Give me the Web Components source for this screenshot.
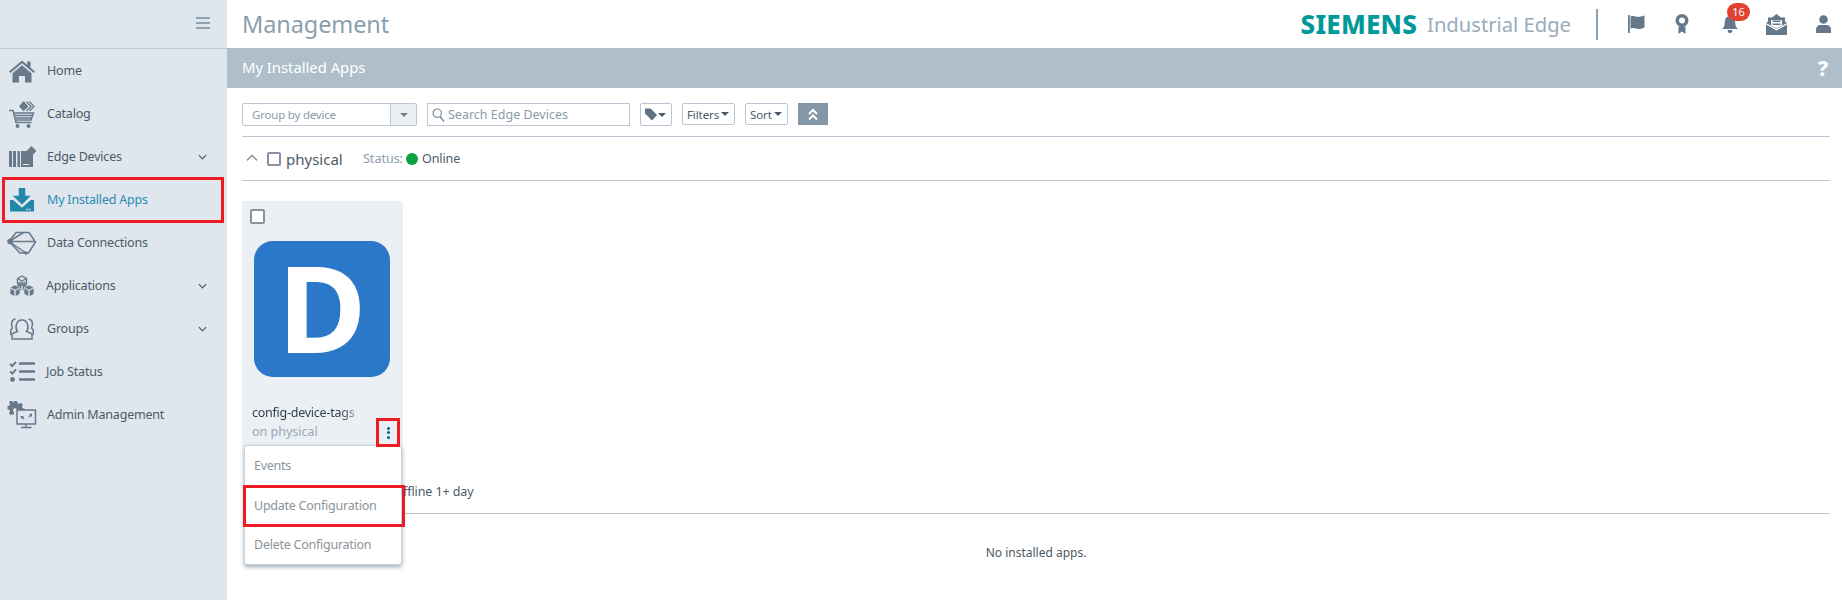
<!DOCTYPE html>
<html>
<head>
<meta charset="utf-8">
<title>Management</title>
<style>
  html, body {
    margin: 0;
    height: 100%;
    overflow: hidden;
    background: #fff;
    font-family: "Noto Sans", "Open Sans", sans-serif;
  }
</style>
</head>
<body>
<edge-app></edge-app>
<script>
const ICONS = {
  home: `<svg width="28" height="24" viewBox="0 0 28 24"><path fill="currentColor" d="M1 12.500 14 1.500l5 4.200V2.500h3.600v6.300L27 12.500l-1.300 1.500L14 4.300 2.300 14z"/><path fill="currentColor" d="M4.500 14.200 14 6.300l9.500 7.900V23.500H17v-6.500h-6v6.500H4.500z"/></svg>`,
  catalog: `<svg width="28" height="28" viewBox="0 0 28 28"><path fill="currentColor" d="M11 6.500 15.500 1l5 5.500-5 4.800z"/><path fill="none" stroke="currentColor" stroke-width="1.300" d="M18.500 1.500 23 6.500l-4.500 4.500M21.500 1.500 26 6.500l-4.500 4.500"/><path fill="none" stroke="currentColor" stroke-width="1.500" d="M1 10.500h4l3 12h15.500M6 13h19.500l-2.500 7H8"/><path stroke="currentColor" stroke-width="1.300" d="M7 15.500h17M7.500 18h16"/><circle cx="9.500" cy="26" r="2" fill="currentColor"/><circle cx="20.500" cy="26" r="2" fill="currentColor"/></svg>`,
  devices: `<svg width="28" height="22" viewBox="0 0 28 22"><path fill="currentColor" d="M1 5h3v16H1zM5 5h3v16H5zM9.500 5H12v16H9.500zM13 5h7l2.500 3 2.500-1.500V21H13z"/><path fill="currentColor" d="M23.500 0 28.500 5l-5 5-5-5z"/><path fill="#dfe6ee" d="M15 19h6v-1h-6z"/></svg>`,
  install: `<svg width="24" height="24" viewBox="0 0 26 26"><path fill="currentColor" d="M9.500 0h7v8.500h6L13 18 3 8.500h6.500z"/><path fill="currentColor" d="M0 13h3.500L13 21.500 22.500 13H26v12.500H0z"/><path fill="#dfe6ee" d="M17.500 22.500h1.700v1.500h-1.700zM20.500 22.500h1.700v1.500h-1.700z"/></svg>`,
  data: `<svg width="30" height="24" viewBox="0 0 30 24"><g fill="none" stroke="currentColor" stroke-width="1.500"><path d="M9 1.500h13l6.500 9.500-7 11H13L2 10.500z"/><path d="M2 10.500 16.500 1.500M2 10.500h26M2 10.500 19 22"/></g><circle cx="3" cy="10.500" r="2.800" fill="currentColor"/><circle cx="18.800" cy="22" r="1.800" fill="currentColor"/></svg>`,
  apps: `<svg width="26" height="22" viewBox="0 0 26 22"><g fill="currentColor" stroke="#dfe6ee" stroke-width=".6"><path d="M8 7 13 4.500 18 7l-5 2.500z"/><path d="M8 7.500v6l4.700 2.500V10zM18 7.500v6L13.300 16V10z"/><path d="M1 12.500 6 10l5 2.500L6 15z"/><path d="M1 13v6l4.700 2.500v-6zM11 13v6l-4.700 2.500v-6z"/><path d="M15 12.500 20 10l5 2.500L20 15z"/><path d="M15 13v6l4.700 2.500v-6zM25 13v6l-4.700 2.500v-6z"/></g><path fill="#dfe6ee" d="M9 6 13 1l4 5-4 2z"/><path fill="none" stroke="currentColor" stroke-width="1.300" d="M8.500 3.500 13 1l4.500 2.500V8L13 10 8.500 8zM8.500 3.500 13 6l4.500-2.500M13 6v4"/></svg>`,
  groups: `<svg width="24" height="22" viewBox="0 0 24 22"><g fill="none" stroke="currentColor" stroke-width="1.500"><path d="M7.500 13.500C5 10.500 5.500 2 12 2s7 8.500 4.500 11.500c3 1 5 2 5.500 3V21H2v-4.500c.5-1 2.500-2 5.500-3z"/><path d="M5.500 1C1.500 1.500.5 6 2.500 10c-1 .8-1.700 1.200-1.700 2v5M18.500 1c4 .5 5 5 3 9 1 .8 1.700 1.200 1.700 2v5"/></g></svg>`,
  jobs: `<svg width="26" height="22" viewBox="0 0 26 22"><g fill="none" stroke="currentColor"><path stroke-width="2" d="M1 3 3.300 5 7 .8M1 10.500l2.300 2L7 8.300"/><path stroke-width="2.500" d="M10 2.500h16M10 10.500h16M10 18.500h16"/></g><circle cx="3.500" cy="18.500" r="2.400" fill="currentColor"/></svg>`,
  admin: `<svg width="30" height="28" viewBox="0 0 30 28"><path fill="currentColor" d="M7 0h3l.5 2 1.700.8 1.800-1 2 2-1 1.800.7 1.700 2 .5v1.200H10V9.500a2 2 0 1 0-3 1.500v2.800l-1.200-.5-1.800 1-2-2 1-1.800-.8-1.700L.5 8.300v-3l1.700-.5L3 3.100l-1-1.800 2-2 1.800 1L7 2z"/><path fill="none" stroke="currentColor" stroke-width="1.500" d="M10 9h18.500v14h-18.500z"/><path stroke="currentColor" stroke-width="1.500" d="M19 23v3M14 26.500h10.500"/><path fill="currentColor" d="M13.500 15h3.500l-1 1 1.500 1.500-1 1-1.500-1.500-1 1zM25 12.500V16l-1-1-1.500 1.500-1-1 1.500-1.500-1-1z"/></svg>`,
  chevron: `<svg width="9" height="6" viewBox="0 0 10 6"><path fill="none" stroke="currentColor" stroke-width="1.300" d="M1 1l4 4 4-4"/></svg>`,
  up: `<svg width="12" height="7" viewBox="0 0 12 7"><path fill="none" stroke="currentColor" stroke-width="1.200" d="M1 6.300l5-5 5 5"/></svg>`,
};

class NavItem extends HTMLElement {
  constructor() {
    super();
    this.attachShadow({ mode: 'open' });
  }

  connectedCallback() {
    const icon = ICONS[this.getAttribute('icon')];
    const arrow = this.hasAttribute('expandable')
      ? `<span class="arrow">${ICONS.chevron}</span>`
      : '';
    this.shadowRoot.innerHTML = `
      <style>
        :host {
          display: flex;
          align-items: center;
          height: 43px;
          position: relative;
          color: #68798a;
          font-size: 12.5px;
        }
        :host([active]) {
          color: #2387aa;
        }
        :host([marked])::after {
          content: '';
          position: absolute;
          inset: -1px 3px -2px 2px;
          border: 3px solid #ed1c24;
        }
        .icon {
          width: 30px;
          margin-left: 7px;
          margin-right: 10px;
          display: flex;
          justify-content: center;
          flex: none;
        }
        .label {
          flex: 1;
          color: #4c5a66;
          letter-spacing: -0.2px;
        }
        :host([tight]) .label {
          margin-left: -1px;
        }
        :host([active]) .label {
          color: #2a8cb2;
        }
        .arrow {
          display: flex;
          margin-right: 20px;
          color: #4c5a66;
        }
      </style>
      <span class="icon">${icon}</span>
      <span class="label"><slot></slot></span>
      ${arrow}
    `;
  }
}

class EdgeSidebar extends HTMLElement {
  constructor() {
    super();
    this.attachShadow({ mode: 'open' });
    this.shadowRoot.innerHTML = `
      <style>
        :host {
          display: block;
          width: 227px;
          flex: none;
          background: #dfe6ee;
        }
        .top {
          height: 48px;
          box-sizing: content-box;
          border-bottom: 1px solid #b9c8d4;
          display: flex;
          justify-content: flex-end;
          align-items: center;
          padding-right: 17px;
        }
        .burger {
          display: block;
          width: 14px;
          height: 2px;
          margin-bottom: 2px;
          background: #8fa3b3;
          box-shadow: 0 -5px 0 #8fa3b3, 0 5px 0 #8fa3b3;
        }
      </style>
      <div class="top"><span class="burger"></span></div>
      <nav>
        <nav-item icon="home">Home</nav-item>
        <nav-item icon="catalog">Catalog</nav-item>
        <nav-item icon="devices" expandable>Edge Devices</nav-item>
        <nav-item icon="install" active marked>My Installed Apps</nav-item>
        <nav-item icon="data">Data Connections</nav-item>
        <nav-item icon="apps" expandable tight>Applications</nav-item>
        <nav-item icon="groups" expandable>Groups</nav-item>
        <nav-item icon="jobs" tight>Job Status</nav-item>
        <nav-item icon="admin">Admin Management</nav-item>
      </nav>
    `;
  }
}

class EdgeHeader extends HTMLElement {
  constructor() {
    super();
    this.attachShadow({ mode: 'open' });
    this.shadowRoot.innerHTML = `
      <style>
        :host {
          display: flex;
          align-items: center;
          height: 48px;
          padding: 0 11px 0 15px;
          background: #fff;
        }
        h1 {
          margin: 0;
          flex: 1;
          font-size: 23.500px;
          font-weight: 400;
          letter-spacing: -0.1px;
          color: #8a9fae;
        }
        .brand {
          font-size: 26px;
          font-weight: 800;
          color: #009999;
          letter-spacing: 0.2px;
        }
        .product {
          margin-left: 10px;
          font-size: 20.200px;
          color: #9aabb9;
        }
        .sep {
          width: 2px;
          height: 31px;
          background: #8ea1b0;
          margin: 0 30px 0 25px;
        }
        .icons {
          display: flex;
          align-items: center;
          gap: 30px;
          color: #647889;
        }
        .icons span {
          position: relative;
          display: flex;
        }
        .badge {
          position: absolute;
          top: -12px;
          left: 5px;
          width: 23px;
          height: 18px;
          border-radius: 10px;
          background: #e2412f;
          color: #fff;
          font-size: 11px;
          font-weight: 400;
          line-height: 18px;
          text-align: center;
        }
      </style>
      <h1>Management</h1>
      <span class="brand">SIEMENS</span>
      <span class="product">Industrial Edge</span>
      <span class="sep"></span>
      <div class="icons">
        <span><svg width="17" height="18" viewBox="0 0 17 18"><path fill="currentColor" d="M0 0h1.800v18H0zM2.500 1.500c4-1.500 6 1 9 .3 1.700-.3 3.500-.8 5-1.300v12c-1.500.7-3.300 1.200-5 1.400-3 .4-5-2-9-.4z"/></svg></span>
        <span><svg width="14" height="20" viewBox="0 0 14 20"><path fill="currentColor" fill-rule="evenodd" d="M7 0a6.500 6.500 0 0 1 0 13A6.500 6.500 0 0 1 7 0zm0 3.500a3 3 0 1 0 0 6 3 3 0 0 0 0-6z"/><path fill="currentColor" d="M3.500 12.500h7V20L7 17.500 3.500 20z"/></svg></span>
        <span style="margin-left:3px"><svg width="16" height="18" viewBox="0 0 16 18"><path fill="currentColor" d="M8 0c1 0 1.500.6 1.500 1.300C12 2 13.200 4 13.200 7c0 3.500.8 5.500 2.800 7H0c2-1.500 2.800-3.500 2.800-7 0-3 1.200-5 3.700-5.700C6.500.6 7 0 8 0zM5.800 15h4.400A2.200 2.200 0 0 1 8 18a2.200 2.200 0 0 1-2.200-3z"/></svg><b class="badge">16</b></span>
        <span style="margin-left:-2px"><svg width="21" height="21" viewBox="0 0 21 21"><path fill="currentColor" d="M10.500 0 15 3.500h4v4l2 1.500-10.500 6L0 9l2-1.500v-4h4z"/><path fill="#fff" d="M5 6h11v5.500l-5.500 3-5.500-3z"/><path fill="currentColor" d="M6.500 6.500h8V8h-8zM6.500 9.500h8V11h-8z"/><path fill="currentColor" d="M0 10.500 10.500 16.500 21 10.500V21H0z"/></svg></span>
        <span style="margin-left:-1px"><svg width="15" height="18" viewBox="0 0 15 18"><circle cx="7.500" cy="4.500" r="4.300" fill="currentColor"/><path fill="currentColor" d="M0 18v-3.500C0 11.500 2.500 10 4 10h7c1.500 0 4 1.500 4 4.500V18z"/></svg></span>
      </div>
    `;
  }
}

class PageBar extends HTMLElement {
  constructor() {
    super();
    this.attachShadow({ mode: 'open' });
    this.shadowRoot.innerHTML = `
      <style>
        :host {
          display: flex;
          align-items: center;
          justify-content: space-between;
          height: 40px;
          padding: 0 14px 2px 15px;
          box-sizing: border-box;
          background: #aebfcb;
          color: #fff;
          font-size: 14.800px;
        }
        b { font-size: 21px; font-weight: 800; line-height: 1; margin-top: 2px; }
      </style>
      <span><slot></slot></span>
      <b>?</b>
    `;
  }
}

class ToolBar extends HTMLElement {
  constructor() {
    super();
    this.attachShadow({ mode: 'open' });
    this.shadowRoot.innerHTML = `
      <style>
        :host {
          display: flex;
          align-items: flex-start;
          box-sizing: border-box;
          height: 48px;
          padding-top: 15px;
          font-size: 11.500px;
          letter-spacing: -0.1px;
          color: #4c5a66;
        }
        .field {
          box-sizing: border-box;
          height: 23px;
          border: 1px solid #b9c8d4;
          display: flex;
          align-items: center;
          color: #8d9ba6;
        }
        .group {
          width: 175px;
          margin-right: 10px;
          border-radius: 2px;
          padding-left: 9px;
        }
        .group > span { flex: 1; letter-spacing: -0.2px; }
        .group i {
          align-self: stretch;
          width: 25px;
          background: #ebf0f5;
          border-left: 1px solid #b9c8d4;
          display: flex;
          align-items: center;
          justify-content: center;
          color: #75838f;
        }
        .search {
          width: 203px;
          margin-right: 10px;
          padding-left: 4px;
          gap: 3px;
          font-size: 12.500px;
          letter-spacing: 0;
        }
        .btn {
          box-sizing: border-box;
          height: 22px;
          border: 1px solid #b9c8d4;
          border-radius: 2px;
          display: flex;
          align-items: center;
          justify-content: space-between;
          padding: 0 5px 0 4px;
          margin-right: 10px;
        }
        .tag { width: 32px; height: 23px; margin-right: 10px; }
        .caret {
          width: 0;
          height: 0;
          border: 4px solid transparent;
          border-top: 4px solid currentColor;
          border-bottom: 0;
        }
        .collapse {
          width: 30px;
          height: 22px;
          background: #8497a6;
          display: flex;
          align-items: center;
          justify-content: center;
        }
      </style>
      <div class="field group">
        <span>Group by device</span>
        <i><b class="caret"></b></i>
      </div>
      <div class="field search">
        <svg width="13" height="14" viewBox="0 0 13 14"><circle cx="5.200" cy="5.200" r="4.200" fill="none" stroke="#7d8e9c" stroke-width="1.200"/><path stroke="#7d8e9c" stroke-width="1.500" d="M8 8.500l4 5"/></svg>
        <span>Search Edge Devices</span>
      </div>
      <div class="btn tag">
        <svg width="14" height="13" viewBox="0 0 14 13"><path fill="#5f7283" d="M0 0h6l7 7-5.500 6L0 5.500z"/></svg>
        <span class="caret"></span>
      </div>
      <div class="btn" style="width:53px">Filters <span class="caret"></span></div>
      <div class="btn" style="width:43px">Sort <span class="caret"></span></div>
      <div class="collapse">
        <svg width="12" height="13" viewBox="0 0 12 13"><path fill="none" stroke="#fff" stroke-width="2" d="M2 6l4-4 4 4M2 11.500l4-4 4 4"/></svg>
      </div>
    `;
  }
}

class CheckBox extends HTMLElement {
  constructor() {
    super();
    this.attachShadow({ mode: 'open' });
    this.shadowRoot.innerHTML = `
      <style>
        :host {
          display: block;
          box-sizing: border-box;
          width: 14px;
          height: 14px;
          border: 2px solid #8c8f9f;
          border-radius: 2px;
          background: #fff;
          flex: none;
        }
      </style>
    `;
  }
}

class DeviceGroup extends HTMLElement {
  constructor() {
    super();
    this.attachShadow({ mode: 'open' });
    this.shadowRoot.innerHTML = `
      <style>
        :host {
          display: block;
          border-top: 1px solid #b9c8d4;
        }
        .head {
          display: flex;
          align-items: center;
          height: 43px;
          font-size: 12.500px;
          color: #8d9ba6;
        }
        .up { display: flex; margin: 0 9px 2px 4px; color: #6b7c8a; }
        .name {
          width: 77px;
          margin-left: 5px;
          font-size: 15px;
          color: #4c5a66;
        }
        .status { width: 43px; }
        .dot {
          width: 12px;
          height: 12px;
          border-radius: 50%;
          background: #0aa33f;
          margin-right: 4px;
        }
        .online { color: #4c5a66; letter-spacing: -0.1px; }
        .body { display: block; border-top: 1px solid #b9c8d4; padding-top: 20px; }
      </style>
      <div class="head">
        <span class="up">${ICONS.up}</span>
        <check-box></check-box>
        <span class="name"><slot name="name"></slot></span>
        <span class="status">Status:</span>
        <span class="dot"></span>
        <span class="online"><slot name="status"></slot></span>
      </div>
      <div class="body"><slot></slot></div>
    `;
  }
}

class AppCard extends HTMLElement {
  constructor() {
    super();
    this.attachShadow({ mode: 'open' });
    this.shadowRoot.innerHTML = `
      <style>
        :host {
          display: block;
          position: relative;
          box-sizing: border-box;
          width: 161px;
          height: 246px;
          padding: 8px 0 0 8px;
          background: #ebf0f5;
          font-size: 12.500px;
          color: #333f48;
        }
        check-box { width: 15px; height: 15px; }
        .tile {
          width: 136px;
          height: 136px;
          margin: 17px 0 0 4px;
          border-radius: 19px;
          background: #2b78c8;
          color: #fff;
          font-size: 121px;
          font-weight: 700;
          line-height: 130px;
          text-align: center;
        }
        .name {
          margin: 26px 0 0 2px;
          line-height: 19px;
          letter-spacing: -0.25px;
          -webkit-mask-image: linear-gradient(to right, #000 88px, rgba(0, 0, 0, .5) 102px);
          mask-image: linear-gradient(to right, #000 88px, rgba(0, 0, 0, .5) 102px);
        }
        .where { margin-left: 2px; line-height: 20px; color: #9aa7b1; }
        .more {
          position: absolute;
          left: 134px;
          top: 217px;
          z-index: 3;
          box-sizing: border-box;
          width: 24px;
          height: 29px;
          border: 3px solid #ed1c24;
          display: flex;
          flex-direction: column;
          align-items: center;
          justify-content: center;
          gap: 1.500px;
        }
        .more i {
          width: 3px;
          height: 3px;
          border-radius: 50%;
          background: #005f87;
        }
      </style>
      <check-box></check-box>
      <div class="tile">D</div>
      <div class="name"><slot></slot></div>
      <div class="where"><slot name="where"></slot></div>
      <span class="more"><i></i><i></i><i></i></span>
    `;
  }
}

class PopMenu extends HTMLElement {
  constructor() {
    super();
    this.attachShadow({ mode: 'open' });
    this.shadowRoot.innerHTML = `
      <style>
        :host {
          display: block;
          position: absolute;
          left: 17px;
          top: 445px;
          box-sizing: border-box;
          width: 158px;
          height: 120px;
          background: #fff;
          border: 1px solid #c5d2dc;
          border-radius: 3px;
          box-shadow: 0 2px 4px rgba(90, 115, 135, .6);
          font-size: 12.500px;
          letter-spacing: -0.25px;
          color: #8b9299;
          z-index: 2;
        }
        div {
          height: 39.500px;
          line-height: 39.500px;
          padding-left: 9px;
          position: relative;
        }
        div.marked::after {
          content: '';
          position: absolute;
          inset: -1px -4px -2px -2px;
          border: 3px solid #ed1c24;
        }
      </style>
      <div>Events</div>
      <div class="marked">Update Configuration</div>
      <div>Delete Configuration</div>
    `;
  }
}

class EdgeApp extends HTMLElement {
  constructor() {
    super();
    this.attachShadow({ mode: 'open' });
    this.shadowRoot.innerHTML = `
      <style>
        :host {
          display: flex;
          height: 600px;
          width: 1842px;
          overflow: hidden;
        }
        main {
          flex: 1;
          position: relative;
          min-width: 0;
        }
        .content { padding: 0 12px 0 15px; }
        .offline {
          display: flex;
          align-items: center;
          height: 43px;
          margin-top: 24px;
          padding: 0 0 1px 161px;
          box-sizing: border-box;
          border-bottom: 1px solid #b9c8d4;
          font-size: 12.500px;
          letter-spacing: -0.1px;
          color: #4c5a66;
        }
        .empty {
          margin-top: 30px;
          text-align: center;
          font-size: 12px;
          color: #4c5a66;
        }
      </style>
      <edge-sidebar></edge-sidebar>
      <main>
        <edge-header></edge-header>
        <page-bar>My Installed Apps</page-bar>
        <div class="content">
          <tool-bar></tool-bar>
          <device-group>
            <span slot="name">physical</span>
            <span slot="status">Online</span>
            <app-card>
              config-device-tags
              <span slot="where">on physical</span>
            </app-card>
          </device-group>
          <div class="offline">ffline 1+ day</div>
          <div class="empty">No installed apps.</div>
        </div>
        <pop-menu></pop-menu>
      </main>
    `;
  }
}

customElements.define('nav-item', NavItem);
customElements.define('edge-sidebar', EdgeSidebar);
customElements.define('edge-header', EdgeHeader);
customElements.define('page-bar', PageBar);
customElements.define('tool-bar', ToolBar);
customElements.define('check-box', CheckBox);
customElements.define('device-group', DeviceGroup);
customElements.define('app-card', AppCard);
customElements.define('pop-menu', PopMenu);
customElements.define('edge-app', EdgeApp);
</script>
</body>
</html>
